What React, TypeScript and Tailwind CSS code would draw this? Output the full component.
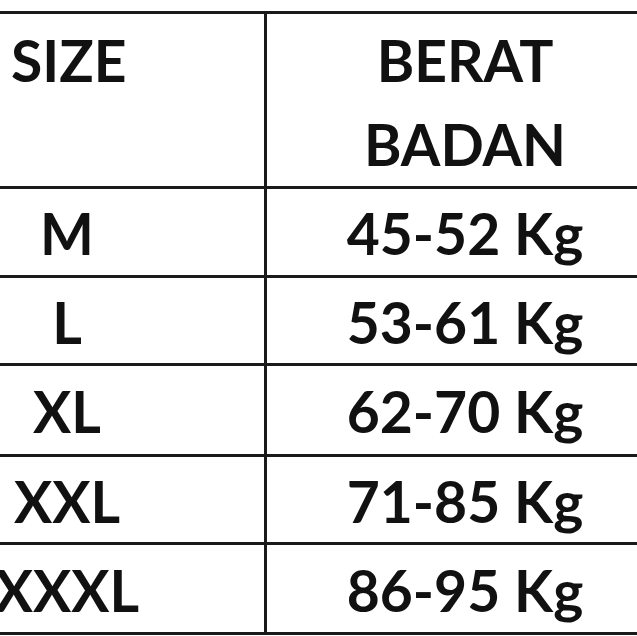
import React from "react";

const rows = [
  { size: "M", weight: "45-52 Kg", h: "h-[89px]" },
  { size: "L", weight: "53-61 Kg", h: "h-[88px]" },
  { size: "XL", weight: "62-70 Kg", h: "h-[91px]" },
  { size: "XXL", weight: "71-85 Kg", h: "h-[88px]" },
  { size: "XXXL", weight: "86-95 Kg", h: "h-[90px]" },
];

const App = () => {
  return (
    <div
      className="h-[636px] w-[637px] overflow-hidden bg-white pt-[11px] text-[#111] font-bold"
      style={{ fontFamily: "Lato, 'Open Sans', sans-serif" }}
    >
      <div className="border-t-[3px] border-[#1a1a1a]">
        <div className="flex h-[175px] border-b-[3px] border-[#1a1a1a]">
          <div className="w-[267px] shrink-0 border-r-[3px] border-[#1a1a1a] pl-[11px] pt-[12px] text-[57px] leading-[68px]">
            SIZE
          </div>
          <div className="flex flex-1 flex-col items-center pl-[26px] pt-[12px] text-[57px]">
            <span className="leading-[68px]">BERAT</span>
            <span className="mt-[16px] leading-[68px]">BADAN</span>
          </div>
        </div>
        {rows.map((r) => (
          <div key={r.size} className={`flex ${r.h} border-b-[3px] border-[#1a1a1a]`}>
            <div className="w-[267px] shrink-0 border-r-[3px] border-[#1a1a1a]">
              <div className="flex h-full w-[134px] items-center justify-center pt-[4px] text-[57px] whitespace-nowrap">
                {r.size}
              </div>
            </div>
            <div className="flex flex-1 items-center justify-center pl-[26px] pt-[4px] text-[57px] whitespace-nowrap">
              {r.weight}
            </div>
          </div>
        ))}
      </div>
    </div>
  );
};

export default App;
